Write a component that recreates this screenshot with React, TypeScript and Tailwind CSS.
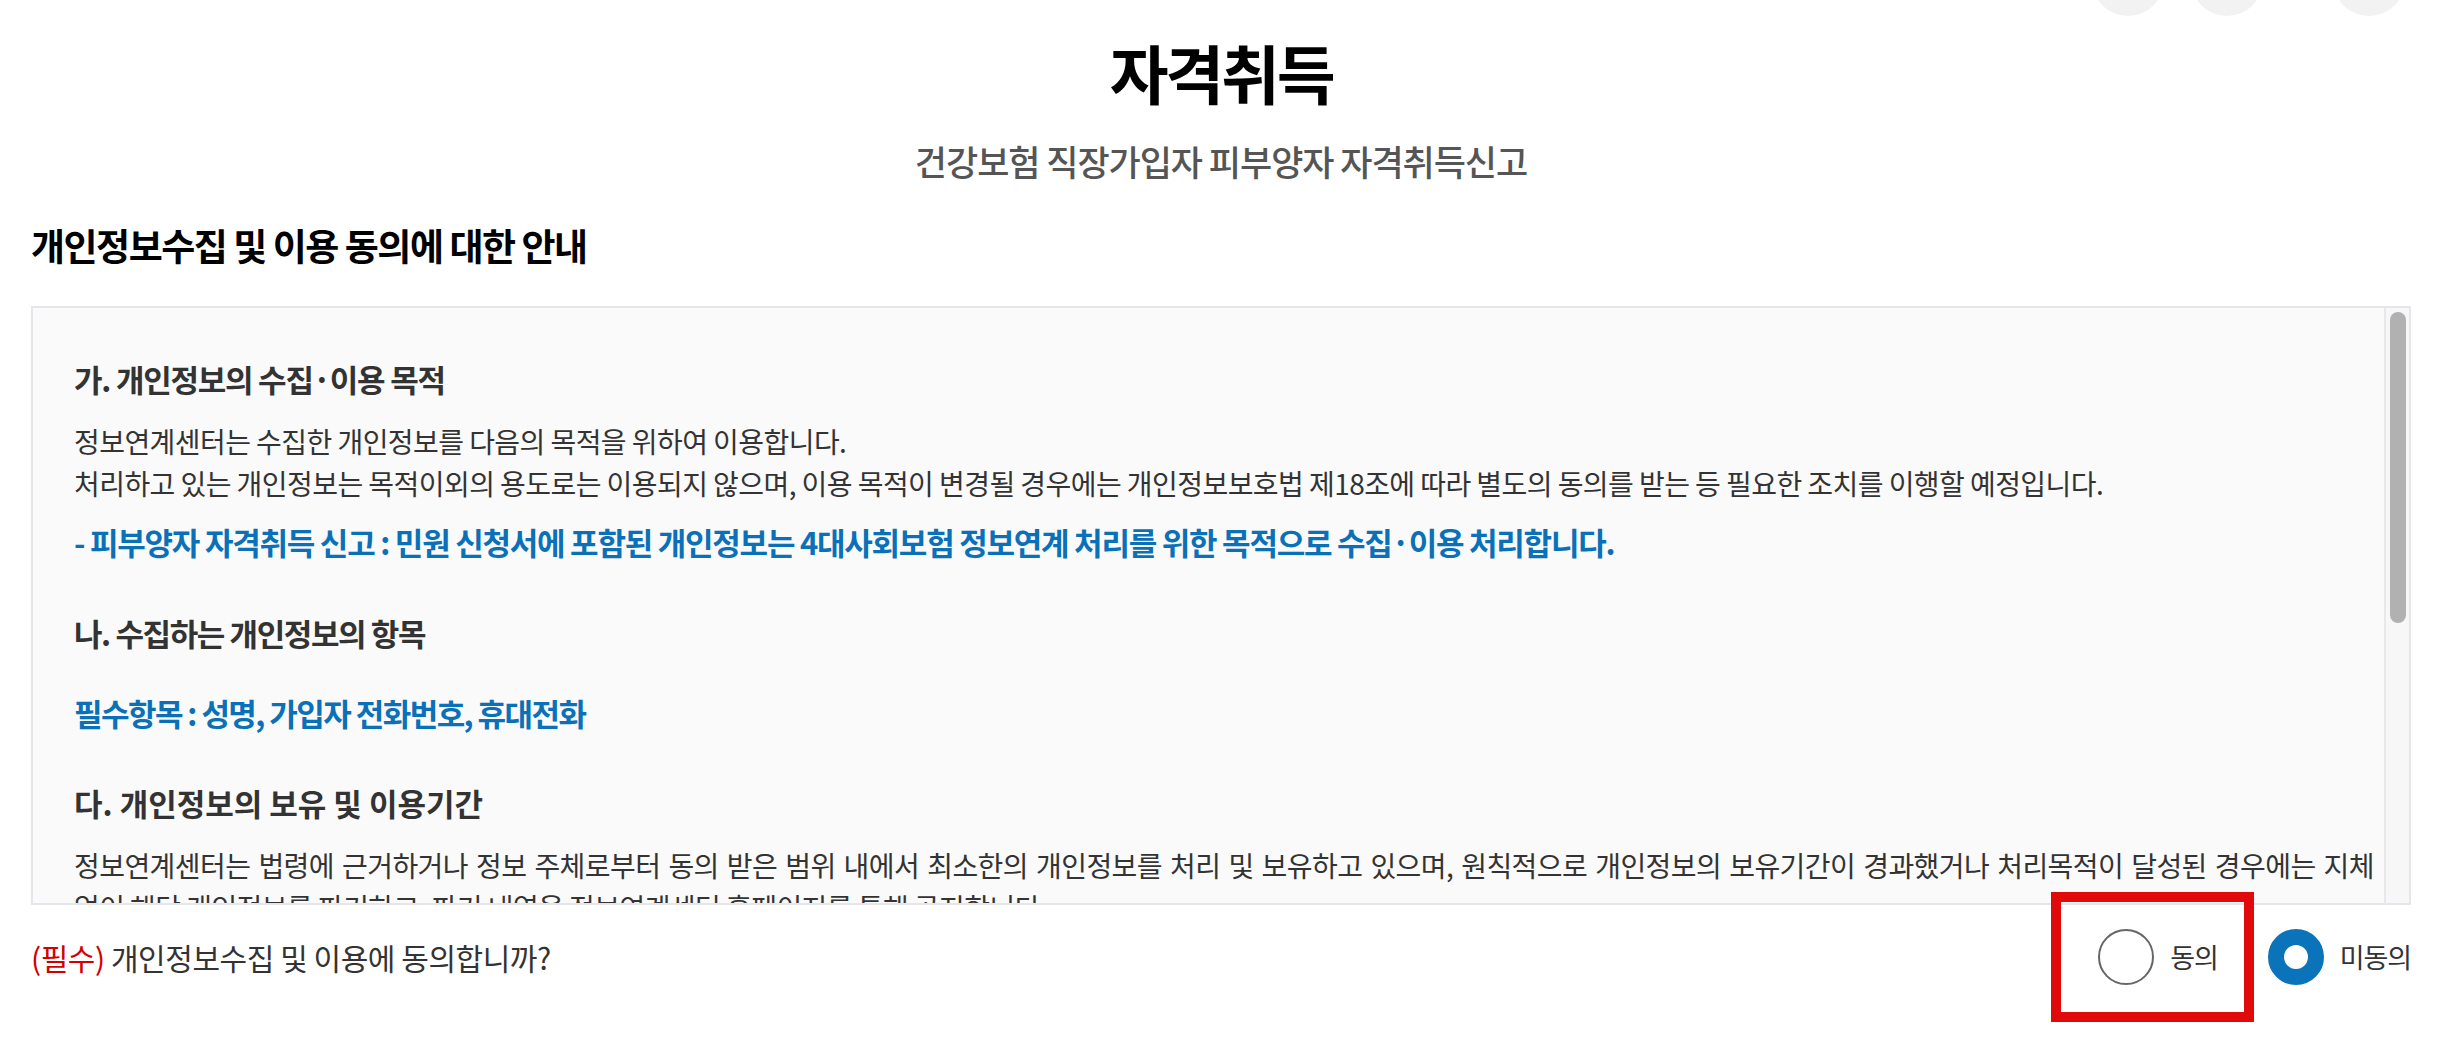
import React from "react";

const font = "font-['Noto_Sans_CJK_KR','Noto_Sans',sans-serif]";

function Radio({ checked, label }: { checked?: boolean; label: string }) {
  return (
    <label className="flex items-center">
      <span
        className={
          checked
            ? "h-[56px] w-[56px] shrink-0 rounded-full border-[16px] border-[#0a73b9] bg-white"
            : "h-[56px] w-[56px] shrink-0 rounded-full border-2 border-[#666666] bg-white"
        }
      />
      <span className="ml-[16px] text-[27px] leading-[40px] tracking-[-0.04em] text-[#333333]">{label}</span>
    </label>
  );
}

export default function App() {
  return (
    <div className={`${font} min-h-screen w-full overflow-hidden bg-white`}>
      <div className="ml-[31px] mr-[41px]">
        {/* header buttons, mostly scrolled out of view */}
        <div className="flex h-[16px] items-end justify-end pr-[6px]">
          <span className="h-[72px] w-[72px] shrink-0 rounded-full bg-[#f2f2f2]" />
          <span className="ml-[27px] h-[72px] w-[72px] shrink-0 rounded-full bg-[#f2f2f2]" />
          <span className="ml-[70px] h-[72px] w-[72px] shrink-0 rounded-full bg-[#f2f2f2]" />
        </div>

        <h1 className="mt-[15px] text-center text-[64px] font-bold leading-[80px] tracking-[-0.05em] text-black">
          자격취득
        </h1>
        <p className="mt-[30px] text-center text-[35px] font-medium leading-[40px] tracking-[-0.03em] text-[#555555]">
          건강보험 직장가입자 피부양자 자격취득신고
        </p>

        <h2 className="mt-[42px] text-[37px] font-bold leading-[44px] tracking-[-0.04em] text-black">
          개인정보수집 및 이용 동의에 대한 안내
        </h2>

        <div className="mt-[39px] flex h-[599px] border-2 border-[#e6e6ea] bg-[#fafafa]">
          <div className="min-w-0 flex-1 overflow-hidden pl-[41px] pr-[10px] pt-[49px] text-[#333333]">
            <h3 className="text-[31px] font-bold leading-[44px] tracking-[-0.04em]">가. 개인정보의 수집·이용 목적</h3>
            <p className="mt-[19px] text-[28px] leading-[42px] tracking-[-0.02em]">
              정보연계센터는 수집한 개인정보를 다음의 목적을 위하여 이용합니다.
              <br />
              처리하고 있는 개인정보는 목적이외의 용도로는 이용되지 않으며, 이용 목적이 변경될 경우에는 개인정보보호법 제18조에 따라 별도의 동의를 받는 등 필요한 조치를 이행할 예정입니다.
            </p>
            <p className="mt-[16px] text-[31px] font-bold leading-[44px] tracking-[-0.04em] text-[#0a71b8]">
              - 피부양자 자격취득 신고 : 민원 신청서에 포함된 개인정보는 4대사회보험 정보연계 처리를 위한 목적으로 수집·이용 처리합니다.
            </p>

            <h3 className="mt-[47px] text-[31px] font-bold leading-[44px] tracking-[-0.045em]">나. 수집하는 개인정보의 항목</h3>
            <p className="mt-[36px] text-[31px] font-bold leading-[44px] tracking-[-0.05em] text-[#0a71b8]">
              필수항목 : 성명, 가입자 전화번호, 휴대전화
            </p>

            <h3 className="mt-[46px] text-[31px] font-bold leading-[44px] tracking-[0em]">다. 개인정보의 보유 및 이용기간</h3>
            <p className="mt-[19px] text-[28px] leading-[42px] tracking-[-0.02em]">
              <span className="block whitespace-nowrap text-justify [text-align-last:justify]">
                정보연계센터는 법령에 근거하거나 정보 주체로부터 동의 받은 범위 내에서 최소한의 개인정보를 처리 및 보유하고 있으며, 원칙적으로 개인정보의 보유기간이 경과했거나 처리목적이 달성된 경우에는 지체
              </span>
              <span className="block">
                없이 해당 개인정보를 파기하고, 파기 내역을 정보연계센터 홈페이지를 통해 공지합니다.
              </span>
            </p>
          </div>

          {/* scrollbar */}
          <div className="w-[25px] shrink-0 border-l-2 border-[#e8e8ec] bg-[#f7f7f7]">
            <div className="mx-auto mt-[4px] h-[311px] w-[16px] rounded-full bg-[#b1b1b1]" />
          </div>
        </div>

        <div className="relative flex h-[104px] items-center justify-between">
          <p className="text-[30px] leading-[40px] tracking-[-0.015em] text-[#333333]">
            <span className="text-[#d40000]">(필수)</span> 개인정보수집 및 이용에 동의합니까?
          </p>
          <div className="flex items-center gap-[50px]">
            <Radio label="동의" />
            <Radio checked label="미동의" />
          </div>
          <div className="pointer-events-none absolute right-[157px] top-[-13px] h-[130px] w-[203px] border-[10px] border-[#e10a0a]" />
        </div>
      </div>
    </div>
  );
}
